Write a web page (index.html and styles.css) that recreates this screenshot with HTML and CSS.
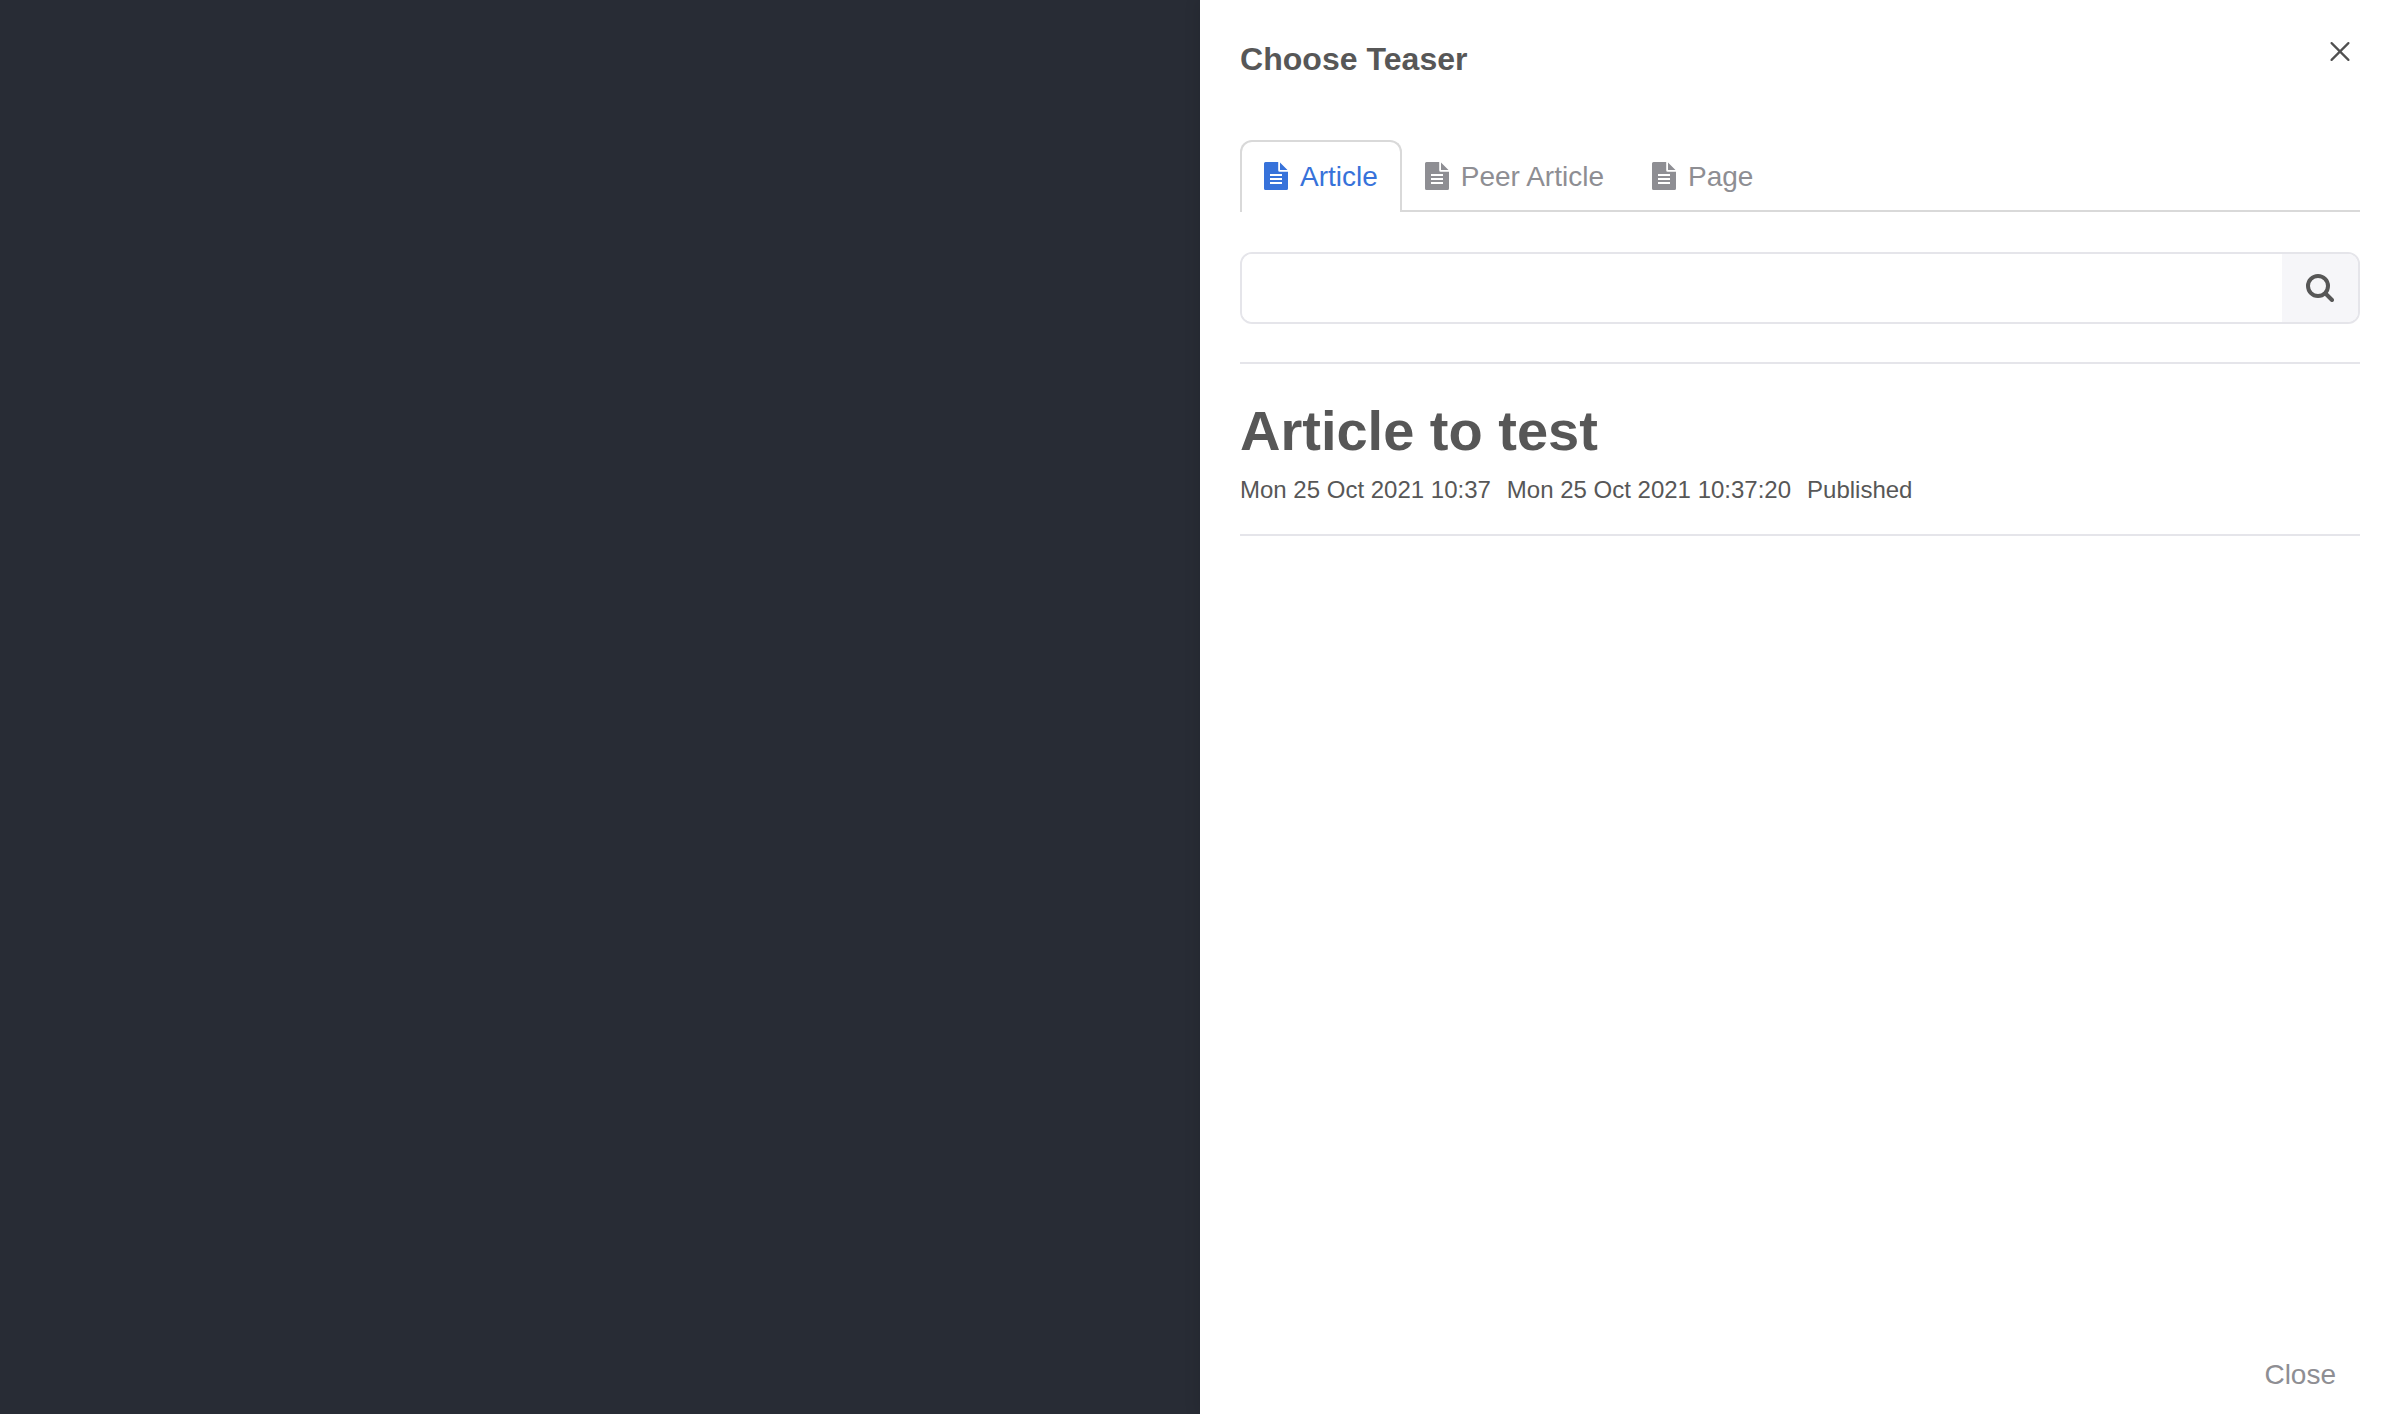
FILE: index.html
```html
<!DOCTYPE html>
<html lang="en">
<head>
<meta charset="utf-8">
<title>Choose Teaser</title>
<link rel="stylesheet" href="styles.css">
</head>
<body>
<svg class="symbols" aria-hidden="true">
  <symbol id="file" viewBox="0 0 24 28"><path fill="currentColor" fill-rule="evenodd" d="M1.5 0H14.2V8.2A1.5 1.5 0 0 0 15.7 9.7H24V26.5A1.5 1.5 0 0 1 22.5 28H1.5A1.5 1.5 0 0 1 0 26.5V1.5A1.5 1.5 0 0 1 1.5 0ZM6 12V14H18V12ZM6 16V18H18V16ZM6 20V22H18V20ZM16 0.5 23.5 8H16Z"/></symbol>
</svg>
<div class="backdrop"></div>
<aside class="drawer">
  <header class="drawer-header">
    <h1 class="drawer-title">Choose Teaser</h1>
    <button class="close-icon" aria-label="Close"><svg width="20" height="20" viewBox="0 0 20 20"><path d="M1.6 1.1 18.4 17.9M18.4 1.1 1.6 17.9" fill="none" stroke="#505050" stroke-width="2.2" stroke-linecap="round"/></svg></button>
  </header>
  <nav class="tabs">
    <a class="tab active"><svg class="file"><use href="#file"/></svg><span class="tab-label">Article</span></a>
    <a class="tab"><svg class="file"><use href="#file"/></svg><span class="tab-label">Peer Article</span></a>
    <a class="tab"><svg class="file"><use href="#file"/></svg><span class="tab-label">Page</span></a>
  </nav>
  <div class="search">
    <input class="search-input" aria-label="Search">
    <button class="search-button" aria-label="Search"><svg width="28" height="28" viewBox="0 0 28 28"><g fill="none" stroke="#575757" stroke-width="4"><circle cx="12" cy="12" r="10"/><path d="m19.5 19.5 6.5 6.5" stroke-linecap="round"/></g></svg></button>
  </div>
  <div class="list">
    <article class="item">
      <h2 class="item-title">Article to test</h2>
      <div class="meta"><span>Mon 25 Oct 2021 10:37</span><span>Mon 25 Oct 2021 10:37:20</span><span>Published</span></div>
    </article>
  </div>
  <footer class="drawer-footer"><button class="close-button">Close</button></footer>
</aside>
</body>
</html>
```

FILE: styles.css
```css
* { box-sizing: border-box; }
body { margin: 0; height: 1414px; display: flex; overflow: hidden; font-family: "Liberation Sans", Arial, sans-serif; color: #575757; }
button { border: 0; padding: 0; background: none; font: inherit; color: inherit; }
.symbols { display: none; }
.backdrop { width: 1200px; background: #282c35; }
.drawer { width: 1200px; padding: 40px 40px 23px; display: flex; flex-direction: column; background: #fff; box-shadow: 0 0 16px rgba(0, 0, 0, 0.12); }
.drawer-header { height: 100px; display: flex; justify-content: space-between; }
.drawer-title { margin: 0; font-size: 32px; line-height: 38px; letter-spacing: 0.04px; }
.close-icon { width: 40px; height: 24px; }
.close-icon svg, .search-button svg { display: block; margin: auto; }
.tabs { height: 72px; display: flex; border-bottom: 2px solid #d9d9d9; }
.tab { height: 72px; padding: 0 24px; display: flex; align-items: center; gap: 12px; font-size: 28px; color: #8e8e93; }
.tab.active { margin-right: -1px; color: #3772da; background: #fff; border: 2px solid #d9d9d9; border-bottom: 0; border-radius: 12px 12px 0 0; padding: 0 22px 2px; }
.tab-label { padding-top: 2px; }
.file { width: 24px; height: 28px; }
.search { margin-top: 40px; height: 72px; display: flex; border: 2px solid #e5e5ea; border-radius: 12px; overflow: hidden; }
.search-input { flex: 1; border: 0; outline: 0; padding: 0 22px; font: 28px "Liberation Sans", sans-serif; }
.search-button { width: 76px; background: #f6f6f9; }
.list { margin-top: 38px; border-top: 2px solid #e5e5ea; }
.item { height: 172px; padding-top: 34px; border-bottom: 2px solid #e5e5ea; }
.item-title { margin: 0; font-size: 56px; line-height: 66px; }
.meta { display: flex; gap: 16px; margin-top: 10px; font-size: 24px; line-height: 32px; }
.drawer-footer { margin-top: auto; display: flex; justify-content: flex-end; padding-right: 24px; }
.close-button { font-size: 28px; color: #8e8e93; }
```
